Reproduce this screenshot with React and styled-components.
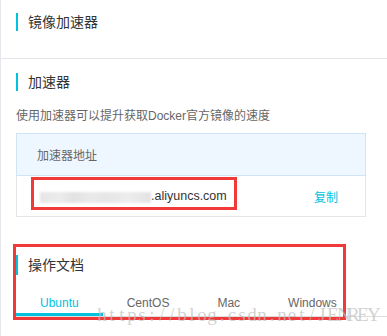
import React from "react";
import styled, { createGlobalStyle } from "styled-components";

const Global = createGlobalStyle`
  html, body { margin: 0; padding: 0; background: #fff; }
  body { font-family: "Liberation Sans", "Noto Sans CJK SC", sans-serif; }
  * { box-sizing: border-box; }
`;

const Page = styled.div`
  position: relative;
  width: 387px;
  height: 336px;
  overflow: hidden;
  background: #fff;
  border-left: 1px solid #e4e7ec;
`;

const TopSection = styled.section`
  height: 59px;
  padding: 13px 0 0 15px;
  border-bottom: 1px solid #e3e5e8;
`;

const Section = styled.section`
  padding: ${(p) => p.$pt}px ${(p) => p.$pr}px 0 15px;
`;

const Heading = styled.h2`
  display: flex;
  align-items: center;
  gap: 10px;
  margin: 0;
  height: ${(p) => p.$h || 18}px;
  font-size: 14px;
  font-weight: normal;
  line-height: 18px;
  color: #333;
  &::before {
    content: "";
    width: 2px;
    height: 100%;
    background: #00c1de;
  }
`;

const Desc = styled.p`
  margin: 16px 0 0;
  font-size: 12px;
  line-height: 18px;
  color: #666;
`;

const Table = styled.div`
  width: 350px;
  margin-top: 8px;
`;

const THead = styled.div`
  height: 43px;
  display: flex;
  align-items: center;
  padding-left: 20px;
  background: #eef6ff;
  border: 1px solid #cfe4f7;
  font-size: 12px;
  color: #666;
`;

const TRow = styled.div`
  height: 41px;
  display: flex;
  align-items: center;
  justify-content: space-between;
  padding: 0 27px 0 23px;
  border: 1px solid #e5e5e5;
  border-top: none;
`;

const Url = styled.span`
  display: flex;
  align-items: center;
  font-size: 12.5px;
  color: #333;
`;

const Blur = styled.span`
  display: inline-block;
  width: 111px;
  height: 11px;
  margin-top: 2px;
  background: linear-gradient(
    90deg,
    #e6e6e6 0%,
    #ececec 18%,
    #e2e2e2 30%,
    #eaeaea 45%,
    #e6e6e6 60%,
    #ededed 80%,
    #e3e3e3 100%
  );
  filter: blur(1px);
`;

const CopyLink = styled.a`
  font-size: 12px;
  color: #00c1de;
  cursor: pointer;
`;

const Tabs = styled.div`
  display: flex;
  margin-top: 19px;
  border-bottom: 1px solid #dedede;
`;

const Tab = styled.div`
  height: 22px;
  padding: 0 24px;
  font-size: 12px;
  line-height: 19px;
  color: ${(p) => (p.$active ? "#00c1de" : "#666")};
  border-bottom: 3px solid ${(p) => (p.$active ? "#00c1de" : "transparent")};
`;

const RedBox = styled.div`
  position: absolute;
  left: ${(p) => p.$x}px;
  top: ${(p) => p.$y}px;
  width: ${(p) => p.$w}px;
  height: ${(p) => p.$h}px;
  border: 3px solid #f03a3a;
  pointer-events: none;
`;

const Watermark = styled.div`
  position: absolute;
  left: 96px;
  top: 304px;
  display: flex;
  font-family: "Liberation Serif", "DejaVu Serif", serif;
  font-size: 19px;
  line-height: 22px;
  color: rgba(190, 190, 190, 0.7);
  pointer-events: none;
`;

const WChar = styled.span`
  display: inline-block;
  width: 10px;
  text-align: center;
`;

const tabs = ["Ubuntu", "CentOS", "Mac", "Windows"];
const mark = "https://blog.csdn.net/JENREY";

export default function App() {
  return (
    <>
      <Global />
      <Page>
        <TopSection>
          <Heading>镜像加速器</Heading>
        </TopSection>
        <Section $pt={14} $pr={21}>
          <Heading>加速器</Heading>
          <Desc>使用加速器可以提升获取Docker官方镜像的速度</Desc>
          <Table>
            <THead>加速器地址</THead>
            <TRow>
              <Url>
                <Blur />
                .aliyuncs.com
              </Url>
              <CopyLink>复制</CopyLink>
            </TRow>
          </Table>
        </Section>
        <Section $pt={38} $pr={0}>
          <Heading $h={20}>操作文档</Heading>
          <Tabs>
            {tabs.map((t, i) => (
              <Tab key={t} $active={i === 0}>
                {t}
              </Tab>
            ))}
          </Tabs>
        </Section>
        <RedBox $x={30} $y={177} $w={206} $h={33} />
        <RedBox $x={12} $y={244} $w={333} $h={76} />
        <Watermark>
          {mark.split("").map((c, i) => (
            <WChar key={i}>{c}</WChar>
          ))}
        </Watermark>
      </Page>
    </>
  );
}
